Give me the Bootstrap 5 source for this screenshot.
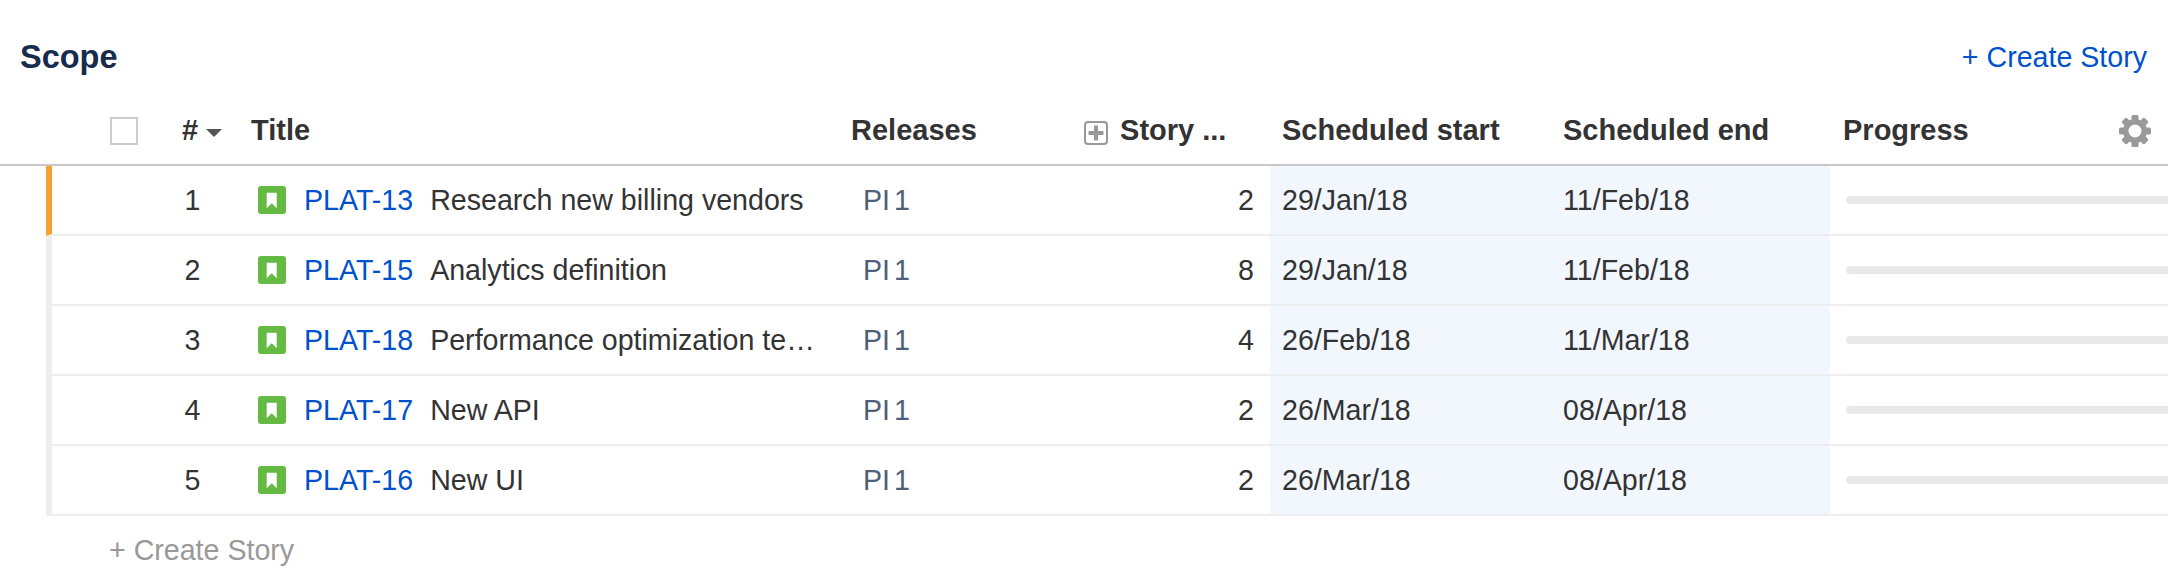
<!DOCTYPE html>
<html lang="en">
<head>
<meta charset="utf-8">
<title>Scope</title>
<link href="https://cdn.jsdelivr.net/npm/bootstrap@5.3.0/dist/css/bootstrap.min.css" rel="stylesheet">
<style>
html,body{background:#fff;margin:0;overflow:hidden}
body{font-family:"Liberation Sans",Arial,sans-serif;font-size:28.6px;color:#333}
.scope-head{height:92px;padding:22px 21px 0 20px}
.scope-title{font-size:32.500px;font-weight:700;color:#172b4d;margin:0;line-height:40px}
.scope-link{color:#0052cc;text-decoration:none;line-height:40px}
.scope-table{table-layout:fixed;width:2168px;margin:0;border-collapse:separate;border-spacing:0}
.scope-table>:not(caption)>*>*{padding:0;border:0;box-shadow:none;background:transparent;vertical-align:middle;color:#333}
.scope-table thead th{height:74px;border-bottom:2px solid #c8c8c8;font-weight:700;font-size:29px;white-space:nowrap;padding-top:6px}
.scope-table tbody td{height:70px;border-bottom:2px solid #eee}
.scope-table tbody td.gutter{border-bottom:0}
.scope-table tbody td.marker{border-left:6px solid #eee}
.scope-table tbody tr.current td.marker{border-left-color:#f6a231}
.box{display:block;width:28px;height:28px;border:2px solid #ccc;margin-left:64px}
.th-num{padding-left:17px!important}
.th-title{padding-left:11px!important}
.th-rel{padding-left:11px!important}
.th-story{padding-left:19px!important}
.th-date{padding-left:12px!important}
.th-date2{padding-left:12px!important}
.th-prog{padding-left:13px!important}
.num-cell{text-align:center;padding-right:20px!important}
.title-cell{padding:0 18px!important}
.key{color:#0052cc;text-decoration:none;margin-left:18px;flex:none}
.ttl{margin-left:17px;min-width:0}
.rel-cell{padding-left:23px!important;color:#505f79!important;word-spacing:-4px}
.story-cell{text-align:right;padding-right:16px!important}
.date-cell{background:#f2f7fe!important;padding-left:12px!important}
.date-cell2{background:#f2f7fe!important;padding-left:12px!important}
.prog-cell{padding-left:16px!important}
.track{height:8px;background:#e9e9e9;border-radius:4px 0 0 4px}
.prog-wrap{padding-right:16px}
.add-row{padding:14px 0 0 109px;color:#999;line-height:40px}
</style>
</head>
<body>
<div class="d-flex justify-content-between align-items-center scope-head">
  <h2 class="scope-title">Scope</h2>
  <a class="scope-link" href="#">+ Create Story</a>
</div>
<table class="table scope-table">
  <colgroup><col style="width:46px"><col style="width:119px"><col style="width:75px"><col style="width:600px"><col style="width:225px"><col style="width:205px"><col style="width:281px"><col style="width:279px"><col style="width:338px"></colgroup>
  <thead>
    <tr>
      <th></th>
      <th><span class="box"></span></th>
      <th class="th-num"># <svg width="16" height="8" viewBox="0 0 16 8" class="align-middle"><path d="M0 0h16L8 8z" fill="#555"/></svg></th>
      <th class="th-title">Title</th>
      <th class="th-rel">Releases</th>
      <th class="th-story"><svg width="24" height="24" viewBox="0 0 24 24" class="me-1 align-middle"><rect x="1" y="1" width="22" height="22" rx="3" fill="#fff" stroke="#999" stroke-width="2"/><path d="M12 4.500v15M4.500 12h15" stroke="#999" stroke-width="4"/></svg> Story ...</th>
      <th class="th-date">Scheduled start</th>
      <th class="th-date2">Scheduled end</th>
      <th class="th-prog"><div class="prog-wrap d-flex justify-content-between align-items-center">Progress
        <svg width="34" height="34" viewBox="0 0 34 34"><g fill="#999"><circle cx="17" cy="17" r="12"/><rect x="13.500" y="1" width="7" height="32" rx="1.500"/><rect x="13.500" y="1" width="7" height="32" rx="1.500" transform="rotate(45 17 17)"/><rect x="13.500" y="1" width="7" height="32" rx="1.500" transform="rotate(90 17 17)"/><rect x="13.500" y="1" width="7" height="32" rx="1.500" transform="rotate(135 17 17)"/></g><circle cx="17" cy="17" r="6.500" fill="#fff"/></svg>
      </div></th>
    </tr>
  </thead>
  <tbody>
    <tr class="current"><td class="gutter"></td><td class="marker"></td><td class="num-cell">1</td><td class="title-cell"><div class="d-flex align-items-center"><svg width="28" height="28" viewBox="0 0 28 28" class="flex-shrink-0"><rect width="28" height="28" rx="3" fill="#65ba43"/><path d="M8.700 6.700h10v15.600l-5-5-5 5z" fill="#fff"/></svg><a class="key" href="#">PLAT-13</a><span class="ttl text-truncate">Research new billing vendors</span></div></td><td class="rel-cell">PI 1</td><td class="story-cell">2</td><td class="date-cell">29/Jan/18</td><td class="date-cell2">11/Feb/18</td><td class="prog-cell"><div class="track"></div></td></tr>
    <tr><td class="gutter"></td><td class="marker"></td><td class="num-cell">2</td><td class="title-cell"><div class="d-flex align-items-center"><svg width="28" height="28" viewBox="0 0 28 28" class="flex-shrink-0"><rect width="28" height="28" rx="3" fill="#65ba43"/><path d="M8.700 6.700h10v15.600l-5-5-5 5z" fill="#fff"/></svg><a class="key" href="#">PLAT-15</a><span class="ttl text-truncate">Analytics definition</span></div></td><td class="rel-cell">PI 1</td><td class="story-cell">8</td><td class="date-cell">29/Jan/18</td><td class="date-cell2">11/Feb/18</td><td class="prog-cell"><div class="track"></div></td></tr>
    <tr><td class="gutter"></td><td class="marker"></td><td class="num-cell">3</td><td class="title-cell"><div class="d-flex align-items-center"><svg width="28" height="28" viewBox="0 0 28 28" class="flex-shrink-0"><rect width="28" height="28" rx="3" fill="#65ba43"/><path d="M8.700 6.700h10v15.600l-5-5-5 5z" fill="#fff"/></svg><a class="key" href="#">PLAT-18</a><span class="ttl text-truncate">Performance optimization tests</span></div></td><td class="rel-cell">PI 1</td><td class="story-cell">4</td><td class="date-cell">26/Feb/18</td><td class="date-cell2">11/Mar/18</td><td class="prog-cell"><div class="track"></div></td></tr>
    <tr><td class="gutter"></td><td class="marker"></td><td class="num-cell">4</td><td class="title-cell"><div class="d-flex align-items-center"><svg width="28" height="28" viewBox="0 0 28 28" class="flex-shrink-0"><rect width="28" height="28" rx="3" fill="#65ba43"/><path d="M8.700 6.700h10v15.600l-5-5-5 5z" fill="#fff"/></svg><a class="key" href="#">PLAT-17</a><span class="ttl text-truncate">New API</span></div></td><td class="rel-cell">PI 1</td><td class="story-cell">2</td><td class="date-cell">26/Mar/18</td><td class="date-cell2">08/Apr/18</td><td class="prog-cell"><div class="track"></div></td></tr>
    <tr><td class="gutter"></td><td class="marker"></td><td class="num-cell">5</td><td class="title-cell"><div class="d-flex align-items-center"><svg width="28" height="28" viewBox="0 0 28 28" class="flex-shrink-0"><rect width="28" height="28" rx="3" fill="#65ba43"/><path d="M8.700 6.700h10v15.600l-5-5-5 5z" fill="#fff"/></svg><a class="key" href="#">PLAT-16</a><span class="ttl text-truncate">New UI</span></div></td><td class="rel-cell">PI 1</td><td class="story-cell">2</td><td class="date-cell">26/Mar/18</td><td class="date-cell2">08/Apr/18</td><td class="prog-cell"><div class="track"></div></td></tr>
  </tbody>
</table>
<div class="add-row">+ Create Story</div>
<script src="https://cdn.jsdelivr.net/npm/bootstrap@5.3.0/dist/js/bootstrap.bundle.min.js"></script>
</body>
</html>
